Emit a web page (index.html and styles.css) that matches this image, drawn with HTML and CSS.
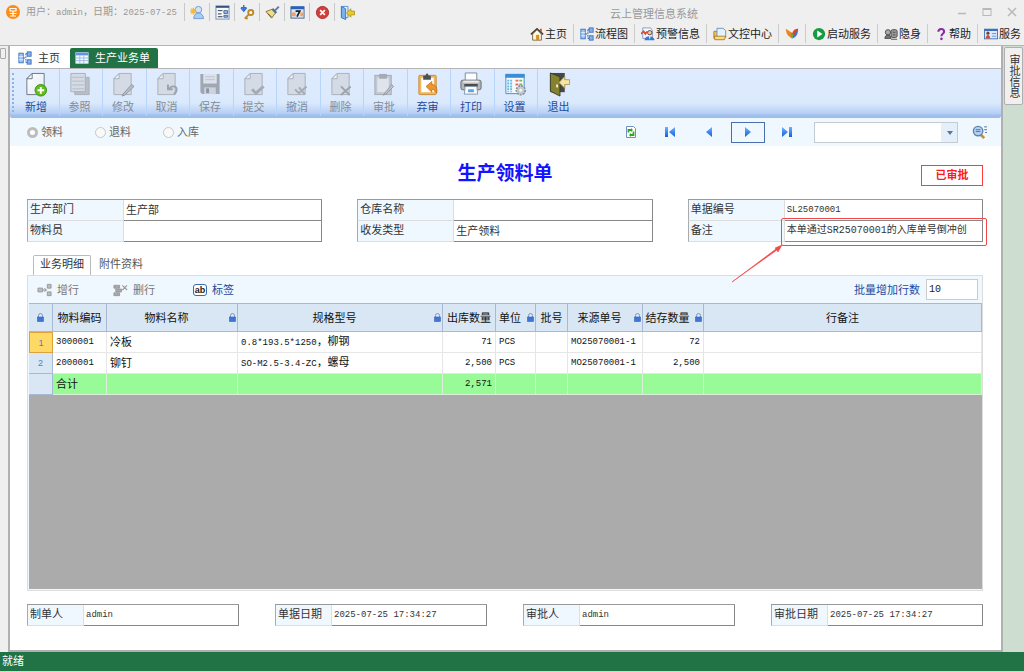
FILE: index.html
```html
<!DOCTYPE html>
<html lang="zh-CN">
<head>
    <meta charset="UTF-8">
    <meta name="viewport" content="width=device-width, initial-scale=1.0">
    <title>云上管理信息系统</title>
    <link rel="stylesheet" href="styles.css">
</head>
<body>
    <!-- shared icons -->
    <svg class="defs" aria-hidden="true">
        <linearGradient id="paper" x1="0" y1="0" x2="1" y2="1"><stop offset="0" stop-color="#fff"/><stop offset="1" stop-color="#dfe9f5"/></linearGradient>
        <linearGradient id="bluefill" x1="0" y1="0" x2="0" y2="1"><stop offset="0" stop-color="#6fb0ff"/><stop offset="1" stop-color="#1560d8"/></linearGradient>
        <symbol id="page" viewBox="0 0 24 26"><path d="M8 1.500H20.500V23.500H2.500V7z" fill="#d5dbe4" stroke="#a9b0ba"/><path d="M8 1.500V7H2.500z" fill="#edf0f4" stroke="#a9b0ba"/></symbol>
        <symbol id="lock" viewBox="0 0 7 9"><path d="M1.500 4V2.500a2 2 0 0 1 4 0V4" fill="none" stroke="#8296bb"/><rect x=".5" y="4" width="6" height="4.500" fill="#3f74d8" stroke="#3763b5" stroke-width=".6"/></symbol>
        <symbol id="flow" viewBox="0 0 16 16"><path d="M6 8h3M9 3v10M9 3h2M9 13h2" fill="none" stroke="#2458a8" stroke-dasharray="2 1"/><rect x="1" y="2.500" width="5" height="11" fill="#9cc4f5" stroke="#3a6fbc"/><path d="M1 6.500h5M1 10h5" stroke="#eaf3ff"/><rect x="10.500" y="1" width="4.500" height="5" fill="#83b3ee" stroke="#3a6fbc"/><rect x="10.500" y="10" width="4.500" height="5" fill="#83b3ee" stroke="#3a6fbc"/></symbol>
    </svg>

    <header class="topbar">
        <div class="title-row">
            <svg class="logo" viewBox="0 0 14 14"><circle cx="7" cy="7" r="7" fill="#ff8a14"/><path d="M4 3.500h6v2.500H4zM7 6v5M3.500 8.500H10.500M4 11h6" fill="none" stroke="#fff" stroke-width="1.200"/></svg>
            <span class="user-info">用户：<span class="num">admin</span>，日期：<span class="num">2025-07-25</span></span>
            <div class="quick">
                <button aria-label="切换用户"><svg viewBox="0 0 16 16"><circle cx="9" cy="5" r="3.500" fill="#cfe4fb" stroke="#6e9ad0"/><path d="M4 14.500c0-8 10-8 10.500 0z" fill="#a7cdf5" stroke="#6e9ad0"/><path d="M3.500 3v7M0 6.500h7M1 4l5 5M6 4L1 9" stroke="#f5b93c" stroke-width="1.400"/></svg></button>
                <button aria-label="表单"><svg viewBox="0 0 16 16"><rect x="1" y="1" width="14" height="14" fill="#f4f8ff" stroke="#6f8db5"/><path d="M1 2h14" stroke="#31527f" stroke-width="2"/><path d="M3 6h5M3 9.500h4M3 12.500h5" stroke="#333"/><path d="M9.500 6h4v3h-4zM9.500 11h4v2h-4z" fill="#9bbce8" stroke="#48678e"/></svg></button>
                <button aria-label="密码"><svg viewBox="0 0 16 16"><path d="M4 0v6M1 3l3 3.500L7 3M1 3h6" fill="none" stroke="#2f6fd8" stroke-width="1.500"/><circle cx="11.500" cy="8" r="2.700" fill="#fff" stroke="#bd8929" stroke-width="2"/><path d="M9.500 10L5 14.500M6 13l2 2" stroke="#bd8929" stroke-width="2"/></svg></button>
                <button aria-label="清理"><svg viewBox="0 0 16 16"><path d="M10 5l4-4 1.500 1.500-4 4z" fill="#637ba5"/><path d="M1 7l8-3 3 3.500L7 14z" fill="#f1dc8a" stroke="#8c7430"/><path d="M8 4.500l4 4" stroke="#476fa7" stroke-width="2"/><path d="M3 9l4 4" stroke="#5c4c22"/></svg></button>
                <button aria-label="日历"><svg viewBox="0 0 16 16"><rect x="1" y="2" width="14" height="12" fill="#d9e7fa" stroke="#45658d"/><path d="M1 3h14" stroke="#2464bd" stroke-width="3"/><path d="M2 8h4v4H2zM11 8h3v4h-3z" fill="#f0a266"/><path d="M6 6.500h4.500L7.500 12.500" fill="none" stroke="#222" stroke-width="1.800"/></svg></button>
                <button aria-label="关闭"><svg viewBox="0 0 16 16"><circle cx="8" cy="8" r="6.500" fill="#d43e3a" stroke="#a92d2b"/><path d="M5.500 5.500l5 5M10.500 5.500l-5 5" stroke="#fff" stroke-width="1.800"/></svg></button>
                <button aria-label="退出系统"><svg viewBox="0 0 16 16"><path d="M1.500 1.500h7v12h-7z" fill="#eaf3fd" stroke="#5a8fcb"/><path d="M1.500 1.500L6 4v11.500l-4.500-2z" fill="#78b2e9" stroke="#3a75b8"/><path d="M15.500 6.500h-4V4L7 8.500l4.500 4.500v-2.500h4z" fill="#efcb22" stroke="#a58816" stroke-width=".8"/></svg></button>
            </div>
            <div class="app-title">云上管理信息系统</div>
            <div class="win-buttons">
                <button aria-label="最小化"><svg viewBox="0 0 12 12"><path d="M2 7.500h8" stroke="#b8b8b8" stroke-width="1.500"/></svg></button>
                <button aria-label="最大化"><svg viewBox="0 0 12 12"><rect x="2" y="2.500" width="8" height="7" fill="none" stroke="#b8b8b8"/><path d="M2 3h8" stroke="#b8b8b8" stroke-width="2"/></svg></button>
                <button aria-label="关闭窗口"><svg viewBox="0 0 12 12"><path d="M2 2l8 8M10 2l-8 8" stroke="#b8b8b8" stroke-width="1.500"/></svg></button>
            </div>
        </div>
        <nav class="main-nav">
            <a href="#"><svg viewBox="0 0 16 16"><path d="M3 8v7h10V8L8 3z" fill="#fff8e2" stroke="#755c2d"/><path d="M1 8.500L8 2l7 6.500" fill="none" stroke="#49453b" stroke-width="1.800"/><path d="M11.500 2h2v4l-2-2z" fill="#b95530"/><path d="M7 9h3.500v6H7z" fill="#d98c22"/></svg>主页</a>
            <a href="#"><svg><use href="#flow"/></svg>流程图</a>
            <a href="#"><svg viewBox="0 0 16 16"><path d="M2 1h9l2 3v9H2z" fill="#f4f8ff" stroke="#7998c4"/><path d="M0 8l3-3 2 3 2-3" fill="none" stroke="#e24735" stroke-width="2"/><circle cx="10" cy="6.500" r="2.500" fill="#f0c59e" stroke="#5a4130"/><path d="M4 15c0-6 11-6 11.500 0z" fill="#3979d4"/><path d="M9 10.500h2l-1 4z" fill="#fff"/></svg>预警信息</a>
            <a href="#"><svg viewBox="0 0 16 16"><path d="M1 5h4l1-2h3v10H1z" fill="#f3c351" stroke="#a77b26"/><path d="M4.500 1.500h7l3 2.500v8h-10z" fill="#e6f1ff" stroke="#628abf"/><path d="M1.500 10.500h13l-1.500 4H2z" fill="#ffdc79" stroke="#a77b26"/></svg>文控中心</a>
            <a href="#" aria-label="主题"><svg viewBox="0 0 16 16"><path d="M8 13L7 6 1 2c0 6 3 9 7 11z" fill="#f08523"/><path d="M8 13C9 8 11 3 15 2c0 6-2 10-7 11z" fill="#3578d8"/><path d="M8 13c-2-3-2-5-1-7 3 1 3 4 1 7z" fill="#69ad38"/><path d="M8 8c1-4 3-6 7-6l-4 7z" fill="#d94432"/></svg></a>
            <a href="#"><svg viewBox="0 0 16 16"><circle cx="8" cy="8" r="7" fill="#149b43"/><path d="M6 4l6 4-6 4z" fill="#fff"/></svg>启动服务</a>
            <a href="#"><svg viewBox="0 0 16 16"><path d="M1 13c0-5 7-5 7 0z" fill="#777" stroke="#444"/><circle cx="4.500" cy="6" r="3" fill="#aaa" stroke="#444"/><rect x="8" y="3" width="7" height="9" rx="2" fill="#9b9b9b" stroke="#444"/><path d="M10 6h3M10 9h3M8 14h7" stroke="#444"/></svg>隐身</a>
            <a href="#"><svg viewBox="0 0 16 16"><path d="M5 5.500c0-4.500 7-4 6.500 0C11.500 8 8.500 7.500 8.500 10.500" fill="none" stroke="#8d27a8" stroke-width="2.400"/><circle cx="8.500" cy="13.500" r="1.500" fill="#8d27a8"/></svg>帮助</a>
            <a href="#"><svg viewBox="0 0 16 16"><rect x=".5" y="2.500" width="15" height="11" fill="#dcebff" stroke="#396eb4"/><path d="M1 3.500h14" stroke="#2f68ba" stroke-width="2"/><circle cx="4.500" cy="7" r="1.800" fill="#7d3e22"/><path d="M2 13c0-5 5-5 5 0z" fill="#d0512c"/><path d="M9 7.500h5M9 10.500h5" stroke="#5b8bc9"/></svg>服务</a>
        </nav>
    </header>

    <div class="workspace">
        <div class="left-dock"><button aria-label="展开"></button></div>

        <main class="main">
            <nav class="page-tabs">
                <a href="#"><svg><use href="#flow"/></svg>主页</a>
                <a href="#" class="active"><svg viewBox="0 0 16 16"><rect x="1" y="2" width="14" height="12" fill="#f7faff" stroke="#d0dff5"/><path d="M1 3.500h14" stroke="#5e93e8" stroke-width="3"/><path d="M1 8h14M1 11h14M5.500 5v9M10 5v9" stroke="#93b4e5"/></svg>生产业务单</a>
            </nav>

            <div class="toolbar">
                <span class="grip"></span>
                <button><svg viewBox="0 0 24 26"><path d="M8 1.500H20.500V23.500H2.500V7z" fill="url(#paper)" stroke="#6b7685"/><path d="M8 1.500V7H2.500z" fill="#fff" stroke="#6b7685"/><circle cx="17" cy="19" r="6" fill="#63bd1b" stroke="#3d9013"/><path d="M17 15.500v7M13.500 19h7" stroke="#fff" stroke-width="2"/></svg>新增</button>
                <button disabled><svg viewBox="0 0 24 26"><path d="M6.500 5.500h15v18h-15z" fill="#b8bec8" stroke="#a9b0ba"/><path d="M2.500 1.500h15v19h-15z" fill="#d5dbe4" stroke="#a9b0ba"/><path d="M4 5.500h12M4 9.500h12M4 13.500h12M4 17.500h12" stroke="#b5bbc4"/></svg>参照</button>
                <button disabled><svg viewBox="0 0 24 26"><use href="#page" width="24" height="26"/><path d="M12 23l9-10 2.500 2L14 24l-3 1z" fill="#b8bec7" stroke="#8e96a1"/></svg>修改</button>
                <button disabled><svg viewBox="0 0 24 26"><use href="#page" width="24" height="26"/><path d="M13 13v5h5M14 18c3-5 8-3 8 0s-1 4-3 5" fill="none" stroke="#9ba3ae" stroke-width="2"/></svg>取消</button>
                <button disabled><svg viewBox="0 0 24 26"><path d="M2 2h20v21H4l-2-2z" fill="#9fa7b2"/><path d="M5 2h14v10H5z" fill="#dce2eb"/><path d="M6 16h12v7H6z" fill="#ccd3dd"/><path d="M8 17h3v5H8z" fill="#8c95a1"/><path d="M7 5h10M7 8h10" stroke="#bbc3ce"/></svg>保存</button>
                <button disabled><svg viewBox="0 0 24 26"><use href="#page" width="24" height="26"/><path d="M10 18l4 4 8-7" fill="none" stroke="#a3abb6" stroke-width="3"/></svg>提交</button>
                <button disabled><svg viewBox="0 0 24 26"><use href="#page" width="24" height="26"/><path d="M10 18l4 4 8-7M14 16l6 7" fill="none" stroke="#a3abb6" stroke-width="2"/></svg>撤消</button>
                <button disabled><svg viewBox="0 0 24 26"><use href="#page" width="24" height="26"/><path d="M12 15l9 9M22 15l-10 9" fill="none" stroke="#9ba3ae" stroke-width="2"/></svg>删除</button>
                <button disabled><svg viewBox="0 0 24 26"><rect x="2.500" y="3.500" width="17" height="20" fill="#c2c8d2" stroke="#a4abb6"/><path d="M5 6h12v15H5z" fill="#dfe4eb"/><path d="M7 2h8v5H7z" fill="#a4abb6"/><path d="M12 23l8-10 2 2-8 8-3 1z" fill="#bdc4ce" stroke="#929aa6"/></svg>审批</button>
                <button><svg viewBox="0 0 24 26"><rect x="2.500" y="3.500" width="18" height="20" rx="1" fill="#f3b65d" stroke="#c98a38"/><path d="M5 6h13v15H5z" fill="#fff"/><path d="M7 4h2l2-3 2 3h2v4H7z" fill="#4b4f56"/><path d="M10 15l6-5v3c4 0 6 4 5 9-1-3-3-4-5-4v3z" fill="#ed962d" stroke="#b96e15" stroke-width=".8"/></svg>弃审</button>
                <button><svg viewBox="0 0 24 26"><path d="M6 1h12v10H6z" fill="#fafcff" stroke="#828991"/><rect x="1.500" y="8.500" width="21" height="10" rx="2" fill="#b5b7b9" stroke="#66696d"/><path d="M4 10h16" stroke="#ededed" stroke-width="2"/><path d="M5 14h14" stroke="#46494e" stroke-width="3"/><path d="M6 15h12l1 8H5z" fill="#f7fbff" stroke="#8a98aa"/><path d="M9 18h6v3H9z" fill="#59a2ea"/></svg>打印</button>
                <button><svg viewBox="0 0 24 26"><path d="M2.500 2.500h19v20h-19z" fill="#f7fbff" stroke="#4a8aca"/><path d="M2 4h20" stroke="#3a8ed6" stroke-width="4"/><path d="M5 8v13M8 8v13" stroke="#5ebadf" stroke-width="2" stroke-dasharray="2 1"/><path d="M14 8v8" stroke="#eb6c59" stroke-width="3" stroke-dasharray="2 2"/><path d="M18 8v6" stroke="#74b963" stroke-width="3" stroke-dasharray="2 2"/><circle cx="18" cy="19" r="4.500" fill="#d4d8dc" stroke="#8c9299" stroke-width="2" stroke-dasharray="2 1"/><circle cx="18" cy="19" r="3.500" fill="#c5c9cd"/><circle cx="18" cy="19" r="1.500" fill="#f5f5f5"/></svg>设置</button>
                <button><svg viewBox="0 0 24 26"><path d="M3 1h15v20H3z" fill="#44484b"/><path d="M3 1l10 4v20L3 20z" fill="#85822f" stroke="#3d3c21"/><path d="M10 13v3" stroke="#eee" stroke-width="2"/><path d="M23 8h-5V4.500L12 11l6 6v-4h5z" fill="#f6e6a0" stroke="#9e8d51" stroke-width=".8"/></svg>退出</button>
            </div>

            <div class="filter-bar">
                <div class="radios">
                    <label><input type="radio" name="kind" checked>领料</label>
                    <label><input type="radio" name="kind">退料</label>
                    <label><input type="radio" name="kind">入库</label>
                </div>
                <div class="pager">
                    <button aria-label="刷新"><svg viewBox="0 0 14 14"><path d="M2.500 1.500h7l2 2v9h-9z" fill="#fff" stroke="#718fc0"/><path d="M4.500 7.500V5H7M9.500 6.500V10H7" fill="none" stroke="#32a423" stroke-width="1.800"/><path d="M7 3l2 2-2 2zM7 8v4L5 10z" fill="#32a423"/></svg></button>
                    <button aria-label="首张"><svg viewBox="0 0 14 14"><path d="M2 2h3v10H2zM12 2v10L6 7z" fill="url(#bluefill)"/></svg></button>
                    <button aria-label="上一张"><svg viewBox="0 0 14 14"><path d="M10 2v10L4 7z" fill="url(#bluefill)"/></svg></button>
                    <button class="current" aria-label="下一张"><svg viewBox="0 0 14 14"><path d="M4 2v10l6-5z" fill="url(#bluefill)"/></svg></button>
                    <button aria-label="末张"><svg viewBox="0 0 14 14"><path d="M2 2v10l6-5zM9 2h3v10H9z" fill="url(#bluefill)"/></svg></button>
                </div>
                <div class="combo">
                    <select aria-label="查找单据"><option></option></select>
                    <svg viewBox="0 0 6 4"><path d="M0 0h6L3 4z" fill="#55779f"/></svg>
                </div>
                <button class="search" aria-label="查询"><svg viewBox="0 0 16 16"><path d="M9 10l4 4" stroke="#d68b2b" stroke-width="3"/><circle cx="6.500" cy="6.500" r="5" fill="#b4d4f5" stroke="#6283ad" stroke-width="1.500"/><path d="M4 5h5M4 7h5" stroke="#4171ae"/><path d="M13 2h3M13 5h3M14 8h2" stroke="#506f98"/></svg></button>
            </div>

            <section class="sheet">
                <div class="sheet-head">
                    <h1>生产领料单</h1>
                    <span class="stamp">已审批</span>
                </div>

                <div class="fields">
                    <div class="group">
                        <div class="field"><label for="dept">生产部门</label><input id="dept" value="生产部"></div>
                        <div class="field"><label for="keeper">物料员</label><input id="keeper"></div>
                    </div>
                    <div class="group">
                        <div class="field"><label for="store">仓库名称</label><input id="store"></div>
                        <div class="field"><label for="type">收发类型</label><input id="type" value="生产领料"></div>
                    </div>
                    <div class="group">
                        <div class="field"><label for="billno">单据编号</label><input id="billno" class="num" value="SL25070001"></div>
                        <div class="field marked">
                            <label for="remark">备注</label><input id="remark" class="mixed" value="本单通过SR25070001的入库单号倒冲创">
                            <span class="mark"></span>
                            <svg class="arrow" viewBox="0 0 52 38"><path d="M1 37L45 4l-1-1 7-3-4 7-1-2z" fill="#f0484b" stroke="#f0484b" stroke-width=".6"/></svg>
                        </div>
                    </div>
                </div>

                <nav class="detail-tabs">
                    <a href="#" class="active">业务明细</a>
                    <a href="#">附件资料</a>
                </nav>

                <div class="detail">
                    <div class="row-tools">
                        <button disabled><svg viewBox="0 0 16 14"><path d="M1 5h5v4H1zM11 1h4v4h-4zM11 9h4v4h-4z" fill="#b9bdc2" stroke="#999"/><path d="M6 7h4M8 5l2 2-2 2" fill="none" stroke="#888"/></svg>增行</button>
                        <button disabled><svg viewBox="0 0 16 14"><path d="M1 2h6v3H1zM3 6h6v3H3zM1 10h6v3H1z" fill="#aaa" stroke="#999"/><path d="M10 2l5 5M15 2l-5 5" stroke="#999" stroke-width="1.200"/></svg>删行</button>
                        <button class="tag-button"><span class="ab">ab</span>标签</button>
                        <label for="batch">批量增加行数</label>
                        <input id="batch" class="mixed" value="10">
                    </div>
                    <div class="grid-area">
                        <table>
                            <colgroup>
                                <col class="c-no"><col class="c-code"><col class="c-name"><col class="c-spec"><col class="c-qty">
                                <col class="c-unit"><col class="c-batch"><col class="c-source"><col class="c-stock"><col>
                            </colgroup>
                            <thead>
                                <tr>
                                    <th><svg class="lock-only"><use href="#lock"/></svg></th>
                                    <th>物料编码</th>
                                    <th class="locked">物料名称<svg><use href="#lock"/></svg></th>
                                    <th class="locked">规格型号<svg><use href="#lock"/></svg></th>
                                    <th>出库数量</th>
                                    <th class="locked">单位<svg><use href="#lock"/></svg></th>
                                    <th>批号</th>
                                    <th class="locked">来源单号<svg><use href="#lock"/></svg></th>
                                    <th class="locked">结存数量<svg><use href="#lock"/></svg></th>
                                    <th>行备注</th>
                                </tr>
                            </thead>
                            <tbody>
                                <tr>
                                    <th class="selected">1</th>
                                    <td class="num">3000001</td>
                                    <td>冷板</td>
                                    <td><span class="num">0.8*193.5*1250</span>，柳钢</td>
                                    <td class="num right">71</td>
                                    <td class="num">PCS</td>
                                    <td></td>
                                    <td class="num">MO25070001-1</td>
                                    <td class="num right">72</td>
                                    <td></td>
                                </tr>
                                <tr>
                                    <th>2</th>
                                    <td class="num">2000001</td>
                                    <td>铆钉</td>
                                    <td><span class="num">SO-M2.5-3.4-ZC</span>，螺母</td>
                                    <td class="num right">2,500</td>
                                    <td class="num">PCS</td>
                                    <td></td>
                                    <td class="num">MO25070001-1</td>
                                    <td class="num right">2,500</td>
                                    <td></td>
                                </tr>
                                <tr class="total">
                                    <th></th>
                                    <td>合计</td>
                                    <td></td>
                                    <td></td>
                                    <td class="num right">2,571</td>
                                    <td></td>
                                    <td></td>
                                    <td></td>
                                    <td></td>
                                    <td></td>
                                </tr>
                            </tbody>
                        </table>
                    </div>
                </div>

                <div class="sign">
                    <div class="field"><label for="maker">制单人</label><input id="maker" class="num" value="admin"></div>
                    <div class="field"><label for="billdate">单据日期</label><input id="billdate" class="num" value="2025-07-25 17:34:27"></div>
                    <div class="field"><label for="checker">审批人</label><input id="checker" class="num" value="admin"></div>
                    <div class="field"><label for="checkdate">审批日期</label><input id="checkdate" class="num" value="2025-07-25 17:34:27"></div>
                </div>
            </section>
        </main>

        <aside class="right-dock"><button>审批信息</button></aside>
    </div>

    <footer class="status">就绪</footer>
</body>
</html>
```
FILE: styles.css
```css
* { box-sizing: border-box; }
body { margin: 0; min-height: 100vh; display: flex; flex-direction: column; background: #efefef; color: #333; font-family: "Liberation Sans", "Noto Sans CJK SC", sans-serif; font-size: 11px; line-height: 16px; }
button, input, select { font: inherit; color: inherit; }
button { background: none; border: none; padding: 0; cursor: pointer; }
button:disabled { cursor: default; }
a { color: inherit; text-decoration: none; }
svg { display: block; flex: none; }
.defs { position: absolute; width: 0; height: 0; }
.num { font-family: "Liberation Mono", "Noto Sans CJK SC", monospace; font-size: 9px; }
.mixed { font-family: "Liberation Mono", "Noto Sans CJK SC", monospace; font-size: 10px; }

/* top bar */
.topbar { border-bottom: 1px solid #b5b5b5; }
.title-row { display: flex; align-items: center; height: 24px; padding-left: 6px; color: #999; }
.logo { width: 14px; height: 14px; margin-right: 6px; }
.user-info { width: 158px; font-size: 10px; white-space: nowrap; }
.quick { display: flex; }
.quick button { display: flex; align-items: center; justify-content: center; width: 25px; height: 18px; border-left: 1px solid #c8c8c8; }
.quick svg { width: 15px; height: 15px; }
.app-title { flex: 1; text-align: center; padding-top: 3px; }
.win-buttons { display: flex; }
.win-buttons button { width: 25px; display: flex; justify-content: center; }
.win-buttons svg { width: 12px; height: 12px; }
.main-nav { display: flex; justify-content: flex-end; height: 21px; padding-bottom: 2px; color: #222; }
.main-nav a { display: flex; align-items: center; gap: 1px; padding: 0 6px; white-space: nowrap; }
.main-nav a + a { border-left: 1px solid #ccc; }
.main-nav a:last-child { padding-right: 3px; }
.main-nav svg { width: 14px; height: 14px; }

/* workspace */
.workspace { flex: 1; display: flex; }
.left-dock { width: 8px; padding-top: 2px; }
.left-dock button { display: block; width: 6px; height: 11px; border: 1px solid #aaa; border-radius: 1px; }
.main { flex: 1; min-width: 0; display: flex; flex-direction: column; background: #fff; border: 2px solid #b0b0b0; border-top: none; }
.right-dock { width: 21px; padding: 1px 1px 0; background: #cdddd0; }
.right-dock button { display: block; width: 19px; height: 58px; background: #f0f0f0; border: 1px solid #b0b0b0; border-radius: 2px; font-size: 11px; line-height: 17px; writing-mode: vertical-rl; }

.page-tabs { display: flex; height: 23px; padding: 2px 0 0 6px; border-bottom: 1px solid #b5b5b5; }
.page-tabs a { display: flex; align-items: center; gap: 6px; padding: 0 10px 0 2px; }
.page-tabs a.active { padding: 0 8px 0 5px; background: #217346; color: #fff; border-radius: 2px 2px 0 0; }
.page-tabs svg { width: 14px; height: 14px; }

.toolbar { display: flex; height: 49px; padding-left: 2px; background: linear-gradient(#dfecff 0%, #dbe9fd 72%, #b7d0f4 94%, #9bbcec 100%); border-bottom: 2px solid #9dbdea; border-radius: 0 0 2px 2px; }
.toolbar .grip { width: 2px; margin: 4px 1px 4px 0; border-left: 2px dotted #8fb2e4; }
.toolbar button { display: flex; flex-direction: column; align-items: center; width: 44px; margin-right: -1px; padding: 3px 2px 0 0; border-right: 1px solid #b7d5fb; color: #1f4a9c; }
.toolbar button:nth-child(even) { width: 45px; }
.toolbar button:last-child { border: none; }
.toolbar button:disabled { color: #868b93; }
.toolbar svg { width: 24px; height: 25px; margin-bottom: 2px; }

.filter-bar { display: flex; align-items: center; height: 28px; padding: 0 14px 0 17px; background: #eff7ff; }
.radios { display: flex; flex: 1; color: #666; }
.radios label { display: flex; align-items: center; gap: 3px; width: 68px; }
.radios input { appearance: none; width: 11px; height: 11px; margin: 0; border: 1px solid #c8c8c8; border-radius: 50%; background: #f9f9f9; }
.radios input:checked { border: 3px solid #bdbdbd; background: #fff; }
.pager { display: flex; gap: 5px; }
.pager button { display: flex; align-items: center; justify-content: center; width: 34px; height: 21px; }
.pager .current { border: 1px solid #4b6fae; }
.pager svg { width: 14px; height: 14px; }
.combo { position: relative; width: 144px; margin: 0 14px 0 10px; }
.combo select { display: block; appearance: none; width: 100%; height: 21px; padding: 0 20px 0 4px; border: 1px solid #c5cbd3; border-radius: 0; background: linear-gradient(to left, #e5effa 16px, #fff 16px); }
.combo svg { position: absolute; right: 5px; top: 9px; width: 6px; height: 4px; pointer-events: none; }
.search svg { width: 15px; height: 15px; }

/* document */
.sheet { flex: 1; display: flex; flex-direction: column; padding: 15px 18px 24px 17px; }
.sheet-head { display: grid; grid-template-columns: 1fr auto 1fr; height: 38px; align-items: start; }
.sheet-head h1 { grid-column: 2; margin: 0; color: #1414ff; font-size: 19px; line-height: 26px; }
.stamp { justify-self: end; width: 62px; margin-top: 4px; border: 1px solid #ff3c3c; color: #ff1818; line-height: 19px; text-align: center; font-weight: bold; }
.fields { display: grid; grid-template-columns: repeat(3, 1fr); gap: 35px; }
.group { border-top: 1px solid #999; }
.field { display: grid; grid-template-columns: 97px 1fr; height: 21px; }
.field label { padding: 1px 2px; border-left: 1px solid #aaa; border-right: 1px solid #ddd; border-bottom: 1px solid #ddd; background: #eff7ff; white-space: nowrap; }
.field input { min-width: 0; width: 100%; padding: 0 2px; border: none; border-right: 1px solid #888; border-bottom: 1px solid #888; background: #fff; }
.marked { position: relative; }
.mark { position: absolute; left: 93px; right: -4px; top: -3px; bottom: -4px; border: 1px solid #f0484b; border-radius: 2px; pointer-events: none; }
.arrow { position: absolute; left: 43px; top: 24px; width: 52px; height: 38px; pointer-events: none; }

.detail-tabs { display: flex; gap: 8px; margin-top: 13px; padding-left: 6px; }
.detail-tabs a { height: 20px; padding-top: 1px; color: #555; }
.detail-tabs .active { margin-bottom: -1px; height: 21px; padding: 0 6px; border: 1px solid #bbb; border-bottom: none; border-radius: 2px 2px 0 0; background: #fff; color: #333; }
.detail { flex: 1; display: flex; flex-direction: column; border: 1px solid #ddd; background: #eff7ff; }
.row-tools { display: flex; align-items: center; height: 27px; padding: 0 4px 0 9px; color: #1f4a9c; }
.row-tools button { display: flex; align-items: center; gap: 5px; width: 76px; }
.row-tools button:disabled { color: #777; }
.row-tools .tag-button { width: auto; margin: 0 auto 0 4px; }
.row-tools svg { width: 15px; height: 14px; }
.ab { width: 14px; height: 12px; border: 1px solid #3c6aa5; border-radius: 3px; background: #fff; color: #222; font-size: 9px; line-height: 10px; font-weight: bold; }
.row-tools input { width: 52px; height: 21px; margin-left: 6px; padding: 0 2px; border: 1px solid #ccc; background: #fff; color: #222; }
.grid-area { flex: 1; margin: 0 0 1px 1px; background: #ababab; }

table { width: 100%; table-layout: fixed; border-collapse: separate; border-spacing: 0; color: #111; }
th, td { height: 21px; padding: 0 3px; line-height: 16px; white-space: nowrap; text-align: left; }
th { padding: 0; text-align: center; font-weight: normal; background: #d9e7f5; border-right: 1px solid #a7b9d3; border-bottom: 1px solid #a7b9d3; }
thead th { position: relative; height: 29px; border-top: 1px solid #a7b9d3; }
thead .locked { padding-right: 11px; }
th svg { position: absolute; right: 1px; top: 9px; width: 7px; height: 9px; }
th .lock-only { position: static; margin: 0 auto; }
tbody th { color: #4a86bd; font-size: 9px; }
tbody .selected { background: #ffd966; border: 1px solid #dda23c; }
td { background: #fff; border-right: 1px solid #e6e6e6; border-bottom: 1px solid #e6e6e6; }
.right { text-align: right; }
.total td { background: #98fb98; border-color: #d9efd9; }
.c-no { width: 24px; }
.c-code { width: 54px; }
.c-name { width: 131px; }
.c-spec { width: 205px; }
.c-qty { width: 53px; }
.c-unit { width: 40px; }
.c-batch { width: 32px; }
.c-source { width: 75px; }
.c-stock { width: 61px; }

.sign { display: grid; grid-template-columns: repeat(4, 1fr); gap: 36px; margin-top: 13px; }
.sign .field { grid-template-columns: 57px 1fr; height: 22px; border-top: 1px solid #999; }

.status { height: 19px; padding: 1px 2px; background: #217346; color: #fff; }
```
